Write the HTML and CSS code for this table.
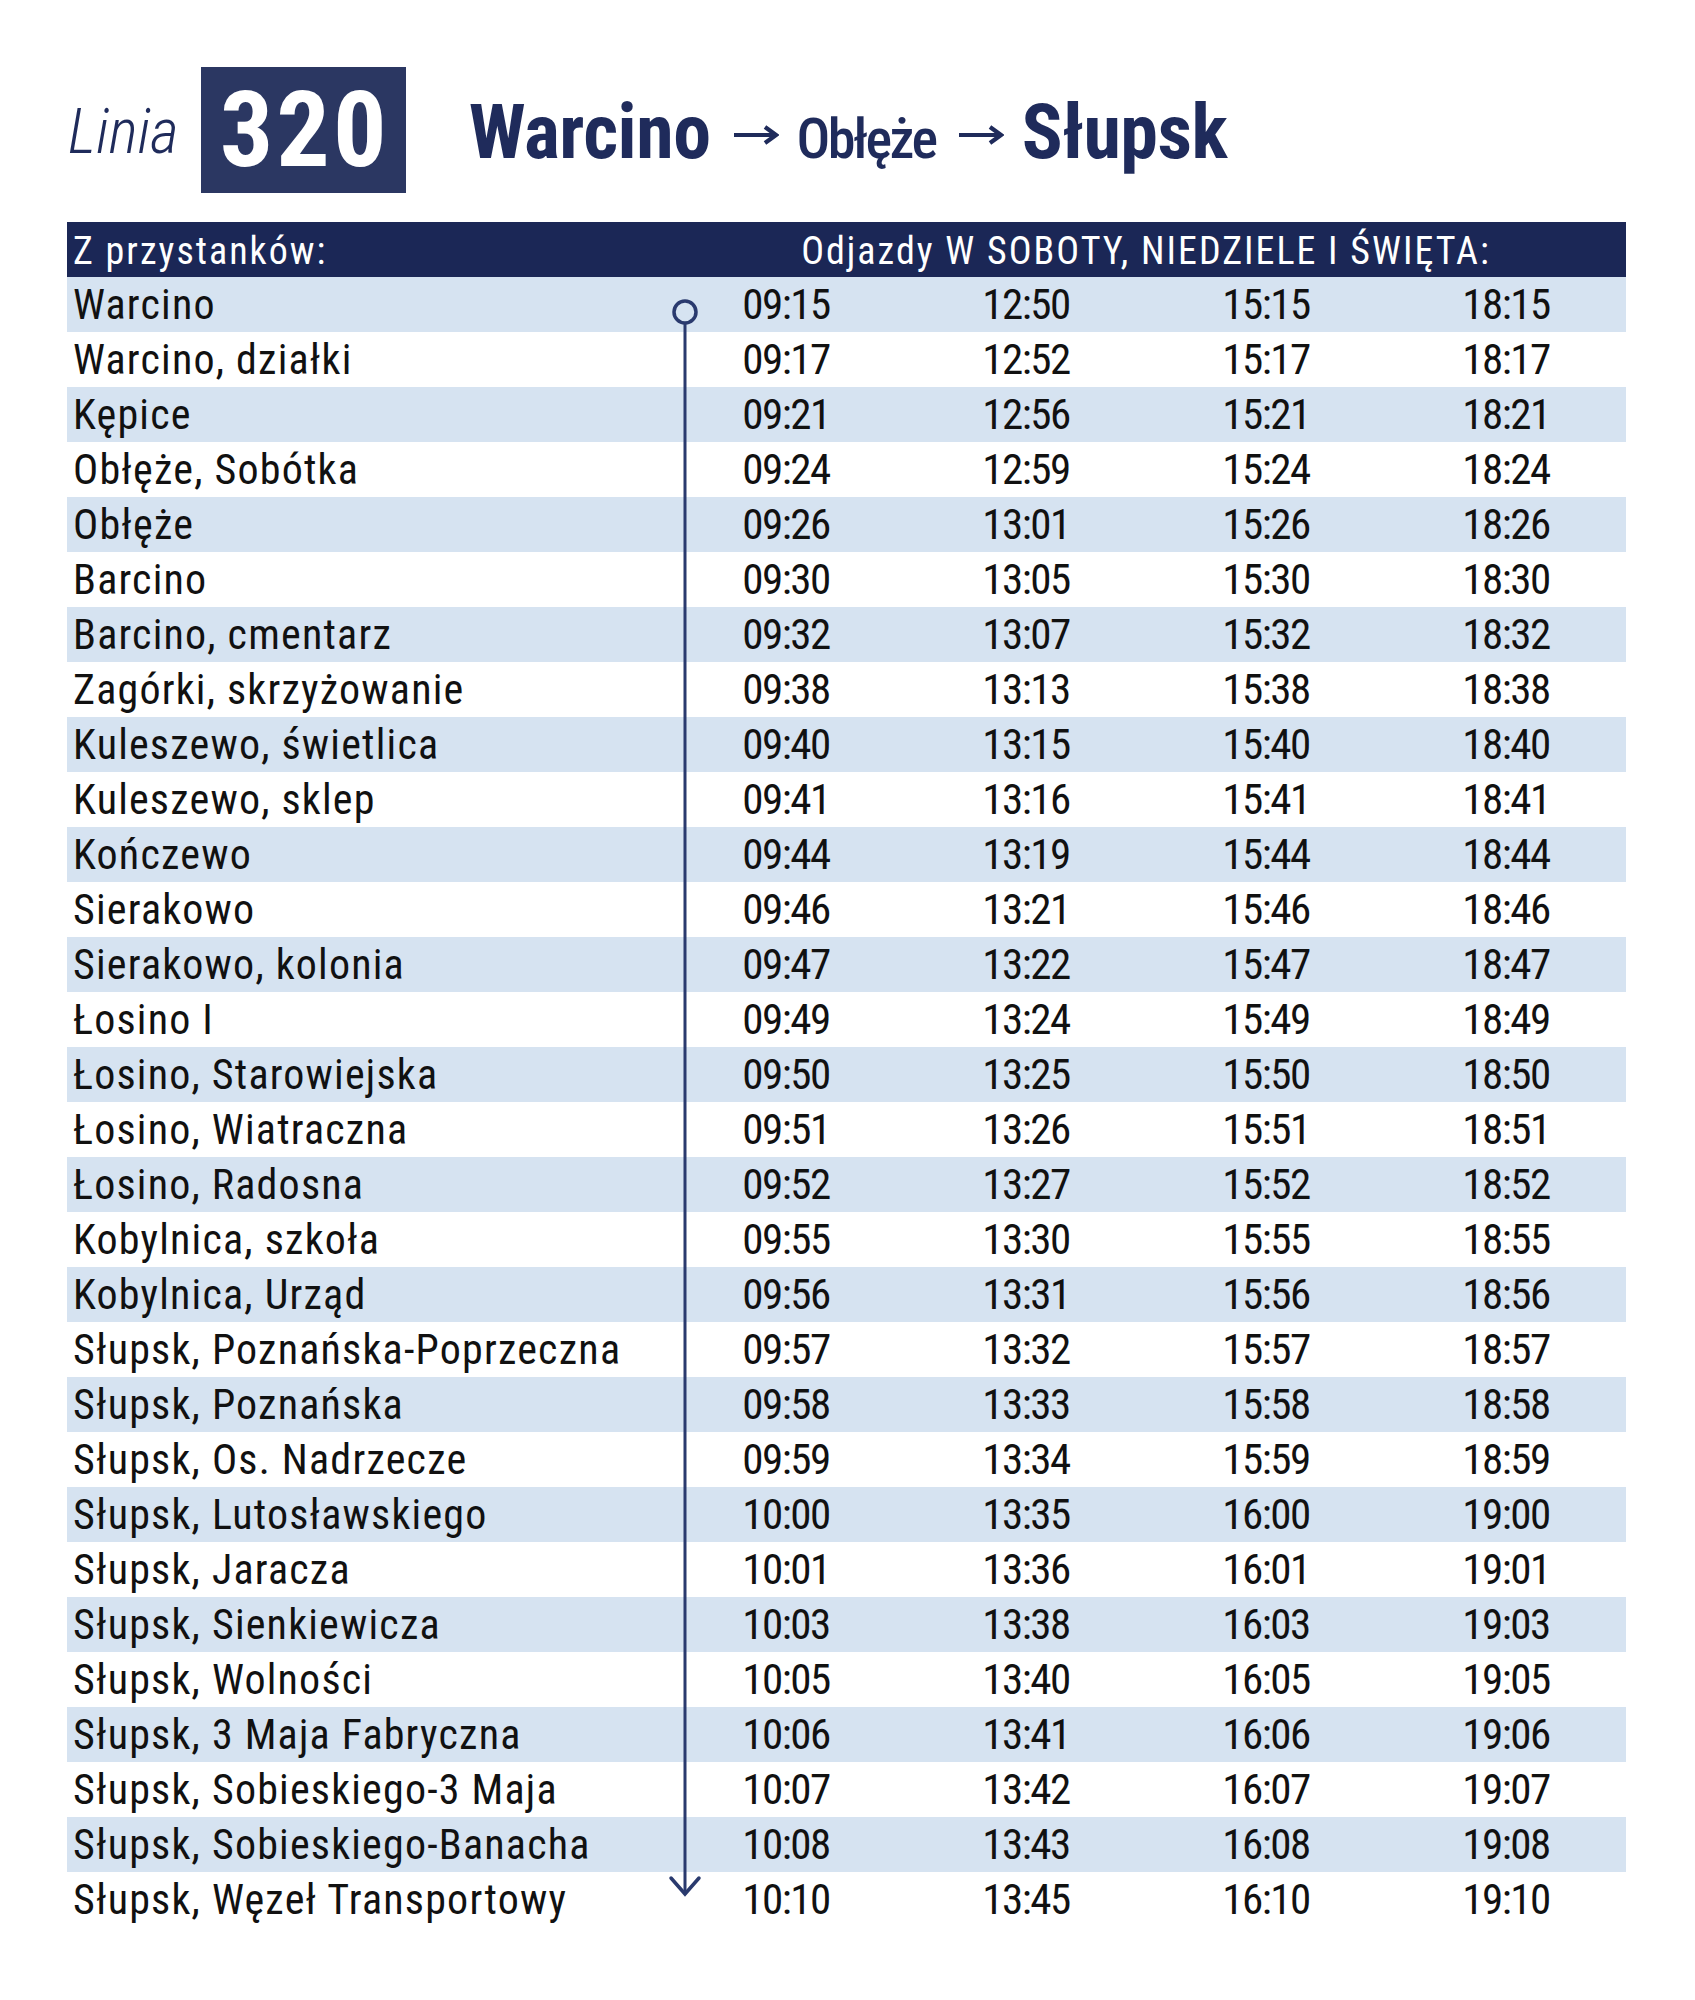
FILE: index.html
```html
<!DOCTYPE html>
<html lang="pl">
<head>
<meta charset="utf-8">
<title>Linia 320</title>
<link rel="stylesheet" href="styles.css">
</head>
<body>
<div class="page">
  <header class="top">
    <div class="linia">Linia</div>
    <div class="badge">320</div>
    <h1 class="route"><span class="major">Warcino</span><svg class="arrow" width="46" height="20" viewBox="0 0 46 20"><path d="M1 10H42M32 2L43 10L32 18" fill="none" stroke="#1f2b5b" stroke-width="4.2" stroke-linejoin="miter"/></svg><span class="minor">Obłęże</span><svg class="arrow" width="46" height="20" viewBox="0 0 46 20"><path d="M1 10H42M32 2L43 10L32 18" fill="none" stroke="#1f2b5b" stroke-width="4.2" stroke-linejoin="miter"/></svg><span class="major">Słupsk</span></h1>
  </header>

  <div class="timetable">
    <div class="thead">
      <div class="th-stops">Z przystanków:</div>
      <div class="th-times">Odjazdy W SOBOTY, NIEDZIELE I ŚWIĘTA:</div>
    </div>
    <div class="tbody">
    <div class="row"><div class="stop">Warcino</div><div class="t">09:15</div><div class="t">12:50</div><div class="t">15:15</div><div class="t">18:15</div></div>
    <div class="row"><div class="stop">Warcino, działki</div><div class="t">09:17</div><div class="t">12:52</div><div class="t">15:17</div><div class="t">18:17</div></div>
    <div class="row"><div class="stop">Kępice</div><div class="t">09:21</div><div class="t">12:56</div><div class="t">15:21</div><div class="t">18:21</div></div>
    <div class="row"><div class="stop">Obłęże, Sobótka</div><div class="t">09:24</div><div class="t">12:59</div><div class="t">15:24</div><div class="t">18:24</div></div>
    <div class="row"><div class="stop">Obłęże</div><div class="t">09:26</div><div class="t">13:01</div><div class="t">15:26</div><div class="t">18:26</div></div>
    <div class="row"><div class="stop">Barcino</div><div class="t">09:30</div><div class="t">13:05</div><div class="t">15:30</div><div class="t">18:30</div></div>
    <div class="row"><div class="stop">Barcino, cmentarz</div><div class="t">09:32</div><div class="t">13:07</div><div class="t">15:32</div><div class="t">18:32</div></div>
    <div class="row"><div class="stop">Zagórki, skrzyżowanie</div><div class="t">09:38</div><div class="t">13:13</div><div class="t">15:38</div><div class="t">18:38</div></div>
    <div class="row"><div class="stop">Kuleszewo, świetlica</div><div class="t">09:40</div><div class="t">13:15</div><div class="t">15:40</div><div class="t">18:40</div></div>
    <div class="row"><div class="stop">Kuleszewo, sklep</div><div class="t">09:41</div><div class="t">13:16</div><div class="t">15:41</div><div class="t">18:41</div></div>
    <div class="row"><div class="stop">Kończewo</div><div class="t">09:44</div><div class="t">13:19</div><div class="t">15:44</div><div class="t">18:44</div></div>
    <div class="row"><div class="stop">Sierakowo</div><div class="t">09:46</div><div class="t">13:21</div><div class="t">15:46</div><div class="t">18:46</div></div>
    <div class="row"><div class="stop">Sierakowo, kolonia</div><div class="t">09:47</div><div class="t">13:22</div><div class="t">15:47</div><div class="t">18:47</div></div>
    <div class="row"><div class="stop">Łosino I</div><div class="t">09:49</div><div class="t">13:24</div><div class="t">15:49</div><div class="t">18:49</div></div>
    <div class="row"><div class="stop">Łosino, Starowiejska</div><div class="t">09:50</div><div class="t">13:25</div><div class="t">15:50</div><div class="t">18:50</div></div>
    <div class="row"><div class="stop">Łosino, Wiatraczna</div><div class="t">09:51</div><div class="t">13:26</div><div class="t">15:51</div><div class="t">18:51</div></div>
    <div class="row"><div class="stop">Łosino, Radosna</div><div class="t">09:52</div><div class="t">13:27</div><div class="t">15:52</div><div class="t">18:52</div></div>
    <div class="row"><div class="stop">Kobylnica, szkoła</div><div class="t">09:55</div><div class="t">13:30</div><div class="t">15:55</div><div class="t">18:55</div></div>
    <div class="row"><div class="stop">Kobylnica, Urząd</div><div class="t">09:56</div><div class="t">13:31</div><div class="t">15:56</div><div class="t">18:56</div></div>
    <div class="row"><div class="stop">Słupsk, Poznańska-Poprzeczna</div><div class="t">09:57</div><div class="t">13:32</div><div class="t">15:57</div><div class="t">18:57</div></div>
    <div class="row"><div class="stop">Słupsk, Poznańska</div><div class="t">09:58</div><div class="t">13:33</div><div class="t">15:58</div><div class="t">18:58</div></div>
    <div class="row"><div class="stop">Słupsk, Os. Nadrzecze</div><div class="t">09:59</div><div class="t">13:34</div><div class="t">15:59</div><div class="t">18:59</div></div>
    <div class="row"><div class="stop">Słupsk, Lutosławskiego</div><div class="t">10:00</div><div class="t">13:35</div><div class="t">16:00</div><div class="t">19:00</div></div>
    <div class="row"><div class="stop">Słupsk, Jaracza</div><div class="t">10:01</div><div class="t">13:36</div><div class="t">16:01</div><div class="t">19:01</div></div>
    <div class="row"><div class="stop">Słupsk, Sienkiewicza</div><div class="t">10:03</div><div class="t">13:38</div><div class="t">16:03</div><div class="t">19:03</div></div>
    <div class="row"><div class="stop">Słupsk, Wolności</div><div class="t">10:05</div><div class="t">13:40</div><div class="t">16:05</div><div class="t">19:05</div></div>
    <div class="row"><div class="stop">Słupsk, 3 Maja Fabryczna</div><div class="t">10:06</div><div class="t">13:41</div><div class="t">16:06</div><div class="t">19:06</div></div>
    <div class="row"><div class="stop">Słupsk, Sobieskiego-3 Maja</div><div class="t">10:07</div><div class="t">13:42</div><div class="t">16:07</div><div class="t">19:07</div></div>
    <div class="row"><div class="stop">Słupsk, Sobieskiego-Banacha</div><div class="t">10:08</div><div class="t">13:43</div><div class="t">16:08</div><div class="t">19:08</div></div>
    <div class="row"><div class="stop">Słupsk, Węzeł Transportowy</div><div class="t">10:10</div><div class="t">13:45</div><div class="t">16:10</div><div class="t">19:10</div></div>
    </div>

    <svg class="route-line" width="1559" height="1705" viewBox="0 0 1559 1705">
      <circle cx="618" cy="90" r="11" fill="none" stroke="#2a3a6e" stroke-width="3.5"/>
      <path d="M618 101.5V1671" stroke="#2a3a6e" stroke-width="3" fill="none"/>
      <path d="M604 1656L618 1672L632 1656" stroke="#2a3a6e" stroke-width="3.5" fill="none" stroke-linecap="round" stroke-linejoin="miter"/>
    </svg>
  </div>
</div>
</body>
</html>
```

FILE: styles.css
```css
html, body {
  margin: 0;
  padding: 0;
  background: #ffffff;
}

body {
  font-family: "Roboto", "DejaVu Sans Condensed", sans-serif;
  font-stretch: 75%;
  color: #111111;
}

.page {
  width: 1695px;
  min-height: 2000px;
  box-sizing: border-box;
  padding: 67px 0 0 67px;
}

/* ---------- heading ---------- */
.top {
  display: flex;
  align-items: flex-start;
  height: 126px;
  margin-bottom: 29px;
}

.linia {
  font-family: "Roboto", sans-serif;
  font-stretch: 82%;
  font-size: 62px;
  line-height: 62px;
  font-style: italic;
  font-weight: 300;
  color: #1f2b5b;
  margin-top: 34px;
  margin-left: 1px;
}

.badge {
  width: 205px;
  height: 126px;
  margin-left: 22px;
  background: #2b3762;
  color: #ffffff;
  font-size: 106px;
  font-weight: 700;
  letter-spacing: 3px;
  display: flex;
  align-items: center;
  justify-content: center;
  padding-left: 3px;
  box-sizing: border-box;
}

.route {
  margin: 27px 0 0 63px;
  font-size: 76px;
  line-height: 76px;
  font-weight: 700;
  color: #1f2b5b;
  white-space: nowrap;
}

.route .major {
  letter-spacing: -0.5px;
}

.route .minor {
  font-size: 56px;
  line-height: 56px;
  font-weight: 500;
  letter-spacing: -2.5px;
}

.route .arrow {
  display: inline-block;
  vertical-align: middle;
  margin: 0 18px 0 22px;
  position: relative;
  top: -3px;
}

/* ---------- timetable ---------- */
.timetable {
  position: relative;
  width: 1559px;
}

.thead,
.row {
  display: grid;
  grid-template-columns: 599px repeat(4, 240px);
}

.thead {
  height: 55px;
  background: #1b2756;
  color: #ffffff;
  font-stretch: 85%;
  font-size: 38px;
  line-height: 51px;
  padding-top: 4px;
  box-sizing: border-box;
  letter-spacing: 2px;
}

.th-stops {
  padding-left: 6px;
}

.th-times {
  grid-column: 2 / span 4;
  text-align: center;
}

.row {
  height: 55px;
  line-height: 55px;
  font-size: 42px;
}

.row:nth-child(odd) {
  background: #d6e3f1;
}

.stop {
  padding-left: 6px;
  white-space: nowrap;
  letter-spacing: 1.2px;
}

.t {
  text-align: center;
  font-size: 43px;
  letter-spacing: -1.5px;
}

.route-line {
  position: absolute;
  left: 0;
  top: 0;
  pointer-events: none;
}
```
